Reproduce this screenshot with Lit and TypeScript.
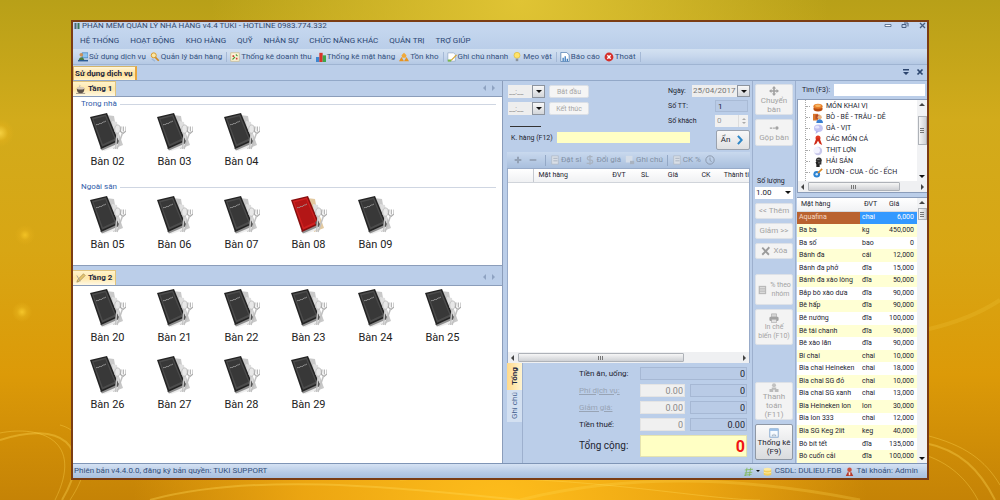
import { LitElement, html, svg, css } from "lit";
import { customElement } from "lit/decorators.js";
import { classMap } from "lit/directives/class-map.js";

type Row = [string, string, string];

const MENU = ["HỆ THỐNG", "HOẠT ĐỘNG", "KHO HÀNG", "QUỸ", "NHÂN SỰ", "CHỨC NĂNG KHÁC", "QUẢN TRỊ", "TRỢ GIÚP"];

const TOOLS: [string, string][][] = [
  [["desk", "Sử dụng dịch vụ"], ["search", "Quản lý bán hàng"]],
  [["calendar", "Thống kê doanh thu"], ["chart", "Thống kê mặt hàng"], ["boxes", "Tồn kho"]],
  [["note", "Ghi chú nhanh"], ["bulb", "Mẹo vặt"]],
  [["report", "Báo cáo"], ["exit", "Thoát"]],
];

const TREE: [string, string][] = [
  ["cake", "MÓN KHAI VỊ"],
  ["people", "BÒ - BÊ - TRÂU - DÊ"],
  ["bubble", "GÀ - VỊT"],
  ["ribbon", "CÁC MÓN CÁ"],
  ["moon", "THỊT LỢN"],
  ["dark", "HẢI SẢN"],
  ["guitar", "LƯƠN - CUA - ỐC - ẾCH"],
];

const ITEMS: Row[] = [
  ["Aquafina", "chai", "6,000"],
  ["Ba ba", "kg", "450,000"],
  ["Ba số", "bao", "0"],
  ["Bánh đa", "cái", "12,000"],
  ["Bánh đa phở", "đĩa", "15,000"],
  ["Bánh đa xào lòng", "đĩa", "50,000"],
  ["Bắp bò xào dưa", "đĩa", "90,000"],
  ["Bê hấp", "đĩa", "90,000"],
  ["Bê nướng", "đĩa", "100,000"],
  ["Bê tái chanh", "đĩa", "90,000"],
  ["Bê xào lăn", "đĩa", "90,000"],
  ["Bí chai", "chai", "10,000"],
  ["Bia chai Heineken", "chai", "18,000"],
  ["Bia chai SG đỏ", "chai", "10,000"],
  ["Bia chai SG xanh", "chai", "13,000"],
  ["Bia Heineken lon", "lon", "30,000"],
  ["Bia lon 333", "chai", "12,000"],
  ["Bia SG Keg 2lít", "keg", "40,000"],
  ["Bò bít tết", "đĩa", "135,000"],
  ["Bò cuốn cải", "đĩa", "100,000"],
];

/* All glyphs share a 12 x 12 grid. */
const GLYPHS: Record<string, unknown> = {
  desk: svg`<rect x="5" y="1" width="7" height="6" fill="#8fc4ee" stroke="#3b7ec0" stroke-width=".8"/><circle cx="4" cy="3.4" r="2.2" fill="#c9925a"/><path d="M1 10c0-5 6-5 6.500 0z" fill="#4b7d3c"/><path d="M0 9.500h12v1.800H0z" fill="#2c5d96"/>`,
  search: svg`<circle cx="4.500" cy="4" r="3" fill="#fbe7a5" stroke="#d99a2b" stroke-width="1.200"/><path d="M6.500 6.500l4 4" stroke="#d08a20" stroke-width="2"/><path d="M2 8l4 3" stroke="#9ab6d8" stroke-width="1.500"/>`,
  calendar: svg`<rect x="1" y="1" width="10" height="10" fill="#fdf6dc" stroke="#cdb77a" stroke-width=".8"/><path d="M3 4h2v2H3zM7 7h2v2H7z" fill="#d23c2e"/><path d="M7 3l2 2M3 9l3-3" stroke="#4b9a3a" stroke-width="1.300"/>`,
  chart: svg`<path d="M0 6h4v6H0z" fill="#3f87cf"/><path d="M4 1h4v11H4z" fill="#d8342a"/><path d="M8 4h4v8H8z" fill="#3da64a"/>`,
  boxes: svg`<path d="M6 1l3 3-1 3H4L3 4z" fill="#f0a93a"/><path d="M3 6l3 5H0zM9 6l3 5H6z" fill="#e8941f"/>`,
  note: svg`<path d="M1 1h7l2 2v8H1z" fill="#fff" stroke="#8aa2bf" stroke-width=".8"/><path d="M12 4L6 10l-2 1 1-2 6-6z" fill="#d9a62e"/><path d="M1 9h4v2.500H1z" fill="#7cb84a"/>`,
  bulb: svg`<circle cx="6" cy="4" r="3.600" fill="#ffe36b" stroke="#d8b12a" stroke-width=".7"/><path d="M4.500 8h3v3h-3z" fill="#8b939c"/>`,
  report: svg`<path d="M1 .5h7l3 3v8H1z" fill="#fff" stroke="#4a79ad" stroke-width=".9"/><path d="M3 7h1.500v4H3zM5.500 5H7v6H5.500zM8 8h1.500v3H8z" fill="#2f72b8"/>`,
  exit: svg`<circle cx="6" cy="6" r="5.300" fill="#d5302b"/><path d="M4 4l4 4M8 4l-4 4" stroke="#fff" stroke-width="1.700"/>`,
  cup: svg`<path d="M1 5h9c0 5-2 6-4.500 6S1 10 1 5z" fill="#5d5147"/><ellipse cx="5.500" cy="5" rx="4.500" ry="1.600" fill="#d9cbb8"/><path d="M0 11.300h11" stroke="#8e8376"/><path d="M4 1c2 1-1 2 1 3" stroke="#999" fill="none" stroke-width=".7"/>`,
  pencil: svg`<path d="M1 11l1-3 7-7 2 2-7 7z" fill="#e7c56d" stroke="#8b7a4d" stroke-width=".7"/><path d="M1 3l4 7" stroke="#9b9b9b"/>`,
  cake: svg`<ellipse cx="6" cy="8" rx="5.500" ry="3.300" fill="#b94d12"/><ellipse cx="6" cy="5" rx="5.500" ry="3" fill="#e8802a"/><ellipse cx="6" cy="4.500" rx="3.500" ry="1.500" fill="#f7b565"/>`,
  people: svg`<path d="M0 1h6v8H0z" fill="#d9772c"/><path d="M3 2h5v5H3z" fill="#b54a26"/><circle cx="8" cy="5" r="2.500" fill="#e9b27c"/><path d="M4 12c0-6 8-6 8 0z" fill="#3a7fd0"/>`,
  bubble: svg`<ellipse cx="6.500" cy="5" rx="5.300" ry="4.500" fill="#c3c3f2"/><ellipse cx="5" cy="3.800" rx="2.500" ry="1.600" fill="#e6e6fd"/><path d="M4 8l-1 4 4-3z" fill="#b0b0e8"/>`,
  ribbon: svg`<circle cx="6" cy="3.500" r="3" fill="#e03a22"/><path d="M4 4l-3 8 3-1.500L6 7l2 3.500 3 1.500-3-8z" fill="#cf2b18"/>`,
  moon: svg`<circle cx="6" cy="6" r="5" fill="#c9c9ea"/><circle cx="4.500" cy="5" r="3.800" fill="#f3f3ff"/>`,
  dark: svg`<circle cx="7" cy="4" r="3.500" fill="#333"/><path d="M3 6h7v3H8v3H4V9z" fill="#222"/><path d="M5 3h3M6 7h3" stroke="#8a8a8a"/>`,
  guitar: svg`<circle cx="4.500" cy="7.500" r="4" fill="#2c83d2"/><circle cx="4.500" cy="7.500" r="1.500" fill="#d6ecff"/><path d="M6 6l5-5" stroke="#d8892a" stroke-width="2"/>`,
  move: svg`<path d="M6 0l2.500 3H7v2h2V3.500L12 6 9 8.500V7H7v2h1.500L6 12 3.500 9H5V7H3v1.500L0 6l3-2.500V5h2V3H3.500z" fill="#a2a2a2"/>`,
  join: svg`<path d="M1 6h3M5 6h2" stroke="#a2a2a2" stroke-width="1.500"/><circle cx="9.500" cy="6" r="2" fill="#a2a2a2"/>`,
  cross: svg`<path d="M1.500 2l8 8.500M10 1.500l-8.500 9" stroke="#9b9b9b" stroke-width="2.200"/>`,
  list: svg`<path d="M2 1h9v10H2z" fill="#b9b9b9"/><path d="M3.500 3h6M3.500 5h6M3.500 7h6M3.500 9h6" stroke="#ececec" stroke-width=".8"/>`,
  print: svg`<path d="M3 1h6v4H3z" fill="#d5d5d5" stroke="#a2a2a2" stroke-width=".7"/><rect x=".5" y="4.500" width="11" height="5" rx="1.500" fill="#a2a2a2"/><path d="M3 7.500h6v4H3z" fill="#e2e2e2" stroke="#a2a2a2" stroke-width=".7"/>`,
  pay: svg`<circle cx="6" cy="3" r="2.700" fill="#c2c2c2"/><path d="M3 6h6v3H3zM0 8h5v4H0zM7 8h5v4H7z" fill="#bbb"/>`,
  stat: svg`<rect x="1" y="1" width="10" height="10" fill="#f7fbff" stroke="#6a95c6" stroke-width=".9"/><path d="M1 1h10v2.500H1z" fill="#9dc1e8"/><path d="M4 8v2M6 7v3M8 8v2" stroke="#7a8fa8" stroke-width=".9"/>`,
  arrow: svg`<path d="M3.500 1L8 6l-4.500 5" fill="none" stroke="#2e87c8" stroke-width="2.400"/>`,
  plus: svg`<path d="M6 1v10M1 6h10" stroke="#93a1b5" stroke-width="3"/>`,
  minus: svg`<path d="M1 6h10" stroke="#93a1b5" stroke-width="2.600"/>`,
  sheet: svg`<path d="M2 1h8v10H2z" fill="#d9dfe7" stroke="#acb6c4" stroke-width=".8"/><path d="M4 4h5M4 7h5" stroke="#a4adba"/>`,
  coin: svg`<path d="M9 2H5C2 2 2 6 5 6h2c3 0 3 4 0 4H2M6 0v12" fill="none" stroke="#a9b3c1" stroke-width="1.500"/>`,
  memo: svg`<path d="M1 1h8v8H1z" fill="#d5dde8"/><path d="M6 7h5v4H6z" fill="#a9b3c1"/>`,
  clock: svg`<circle cx="6" cy="6" r="5" fill="none" stroke="#8d9aae" stroke-width="1.200"/><path d="M6 3v3.500l2 1.500" fill="none" stroke="#8d9aae" stroke-width="1.100"/>`,
  grid: svg`<path d="M1 4l11-1M1 8l10-1M0 11l10-1M4 1L2 12M9 1L7 12" stroke="#7fb95a" stroke-width="1.100"/>`,
  db: svg`<path d="M1 3v7c0 2 10 2 10 0V3z" fill="#f2cf5b"/><ellipse cx="6" cy="3" rx="5" ry="2" fill="#fdeaa3"/><path d="M1 6.500c0 2 10 2 10 0" fill="none" stroke="#fff3c4"/>`,
  user: svg`<circle cx="6" cy="3.500" r="3" fill="#c9503c"/><path d="M1 12l2.500-5h5L11 12z" fill="#b73a2c"/><path d="M5 7h2v4H5z" fill="#f3e1d8"/>`,
  app: svg`<path d="M1 0h4v12H1z" fill="#4d6a7c"/><path d="M7 0h4v12H7z" fill="#39775a"/>`,
};

const icon = (name: string) =>
  html`<svg class="icon ${name}" viewBox="0 0 12 12" aria-hidden="true">${GLYPHS[name]}</svg>`;

const menuBook = (busy: boolean) => {
  const [cover, edge, inner, napkin] = busy
    ? ["#b31616", "#860e0e", "#cf2020", "#e2c9a0"]
    : ["#383838", "#232323", "#4c4c4c", "#c9c9c9"];
  return html`<svg class="book" viewBox="0 0 36 38" aria-hidden="true">
    <path d="M16 2l8 1 1 6 8 23-10 4z" fill="${napkin}" />
    <path d="M22 8l5 1 2 16-4 8z" fill="#dedede" />
    <path d="M11 36l17-6 1 3-15 5z" fill="#ececec" />
    <path d="M10 35l18-7 .8 2.200L12 37.500z" fill="#8f8f8f" />
    <path d="M0 4L17 0l11.500 28L11 36z" fill="${edge}" />
    <path d="M1.800 5L16 1.600l10.500 25.600L12 33.800z" fill="${inner}" />
    <path d="M3.500 6.200L15.300 3.300l9.200 22.500-11.700 5.400z" fill="${cover}" />
    <path d="M6 12c2-2 1 1 3-1s1 1 3-1 1 0 4-2" fill="none" stroke="#a5a5a5" stroke-width=".8" />
    <path d="M24 27l2.500-3.500L29 29l-2 2z" fill="#555" />
    <ellipse cx="27.500" cy="16" rx="2.800" ry="4.200" fill="#e8e8e8" stroke="#b5b5b5" stroke-width=".7" transform="rotate(8 27 16)" />
    <path d="M27 20l-1.500 16" stroke="#c4c4c4" stroke-width="1.400" />
    <path d="M31 13.500l-.5 5 2.500 2 3-2.500v-4.500M33.300 13.500v5" fill="none" stroke="#ababab" stroke-width="1.100" />
    <path d="M32.500 20l-5.500 16" stroke="#c0c0c0" stroke-width="1.500" />
  </svg>`;
};

const table = (n: string) => html`<button class="seat">${menuBook(n === "08")}<span>Bàn ${n}</span></button>`;

const floorHead = (glyph: string, name: string) => html`<header class="floor-head">
  <button class="floor-tab">${icon(glyph)}${name}</button>
  <span class="pager"><i class="tri left"></i><i class="tri right"></i></span>
</header>`;

@customElement("app-root")
export class AppRoot extends LitElement {
  static styles = css`
    :host {
      display: flex;
      position: relative;
      box-sizing: border-box;
      height: 100vh;
      padding: 20px 71px;
      overflow: hidden;
      font: 8px/10px Roboto, "Liberation Sans", sans-serif;
      color: #1d2430;
      background:
        radial-gradient(circle at 22px 312px, #f5c62a 0, #e7b31c88 5px, #0000 10px),
        radial-gradient(circle at 25px 235px, #f2c224 0, #e7b31c66 5px, #0000 10px),
        radial-gradient(circle at 0 133px, #f5d040 0, #e7b31c66 8px, #0000 14px),
        radial-gradient(ellipse at 50% 104%, #ffbe1c 0, #ffb617aa 28%, #0000 52%),
        radial-gradient(ellipse at 52% 0, #e0c434 0, #0000 42%),
        linear-gradient(#b8a018, #d2ab1b 24%, #d8a614 50%, #dc9a08 75%, #c58306);
    }
    * { box-sizing: border-box; }
    button, input, select { font: inherit; color: inherit; margin: 0; padding: 0; border: 0; border-radius: 0; background: none; min-width: 0; }
    .backdrop { position: absolute; inset: 0; width: 100%; height: 100%; }
    .window { position: relative; flex: 1; display: flex; flex-direction: column; min-width: 0; border: 2px solid #7b3d14; background: #bbcee9; overflow: hidden; }
    .icon { flex: none; width: 10px; height: 10px; }
    .tri { width: 0; height: 0; border: 3px solid #0000; }
    .tri.left { border-left: 0; border-right-color: #8fa3c2; }
    .tri.right { border-right: 0; border-left-color: #8fa3c2; }
    .tri.down { border-bottom: 0; border-top-color: #111; }
    .tri.up { border-top: 0; border-bottom-color: #444; }

    .title { display: flex; align-items: center; height: 8px; padding: 0 1px; gap: 2px; overflow: hidden; color: #33486b; background: #c4d6ee; }
    .title .icon { width: 6px; height: 8px; }
    .title h1 { margin: 0; font: inherit; line-height: 8px; flex: 1; }
    .caption { display: flex; gap: 9px; }
    .caption button { width: 8px; height: 8px; color: #4a5f80; display: flex; }
    .caption svg { width: 8px; height: 8px; }
    .menu { display: flex; gap: 11px; height: 19px; padding: 2px 7px 0; background: linear-gradient(#c4d6ee, #bacee9); color: #2b4672; }
    .tools { display: flex; align-items: center; height: 16px; padding-left: 5px; background: linear-gradient(#d3e1f1, #c8d8ed 45%, #b4c8e4); border-bottom: 1px solid #9fb4d2; color: #34527f; }
    .tool-group { display: flex; gap: 4px; padding-right: 4px; margin-right: 3px; border-right: 1px solid #a5b9d6; }
    .tools button { display: flex; align-items: center; gap: 1px; white-space: nowrap; }
    .pages { display: flex; align-items: flex-end; justify-content: space-between; height: 16px; border-bottom: 1px solid #92a8c8; }
    .page-tab { height: 14px; padding: 0 2px 0 1px; font-weight: 700; color: #1b2742; background: linear-gradient(#fff6da, #ffdf94 60%, #fff2cb); border: 1px solid #d5b56a; border-bottom: 0; border-right: 2px solid #e7a63d; }
    .page-ctl { display: flex; gap: 6px; padding: 0 3px 4px; }
    .page-ctl svg { width: 8px; height: 8px; display: block; }

    .body { flex: 1; display: flex; min-height: 0; }
    .floors { flex: 1; min-width: 0; display: flex; flex-direction: column; border-right: 1px solid #8b9dba; }
    .floor-head { flex: none; display: flex; align-items: flex-end; justify-content: space-between; height: 16px; border-bottom: 1px solid #8b9dba; }
    .floor-tab { display: flex; align-items: center; gap: 2px; height: 15px; padding: 0 3px; font-weight: 700; color: #1b2742; background: linear-gradient(#fff3cc, #ffe7a8 50%, #fff9e6); border: 1px solid #e0c37e; border-width: 1px 1px 0 0; }
    .pager { display: flex; gap: 6px; padding: 0 7px 5px; }
    .floor { background: #fff; padding-top: 2px; }
    .floor.first { margin-bottom: 4px; border-bottom: 1px solid #8b9dba; }
    .floor.rest { flex: 1; padding-top: 3px; }
    .zone { height: 83px; }
    .zone h2 { display: flex; align-items: center; gap: 3px; margin: 0 6px 4px 8px; font: inherit; color: #2f5ba8; }
    .zone h2::after { content: ""; flex: 1; height: 1px; background: #cfd6e2; }
    .seats { display: grid; grid-template-columns: repeat(auto-fill, 67px); row-gap: 11px; padding-left: 1px; }
    .seat { display: flex; flex-direction: column; align-items: center; gap: 4px; height: 56px; font-size: 11px; line-height: 14px; color: #222; }
    .book { width: 36px; height: 38px; flex: none; }

    .order { flex: none; width: 245px; margin-left: 4px; display: flex; flex-direction: column; }
    .form { display: flex; justify-content: space-between; height: 70px; padding: 4px 2px 0 1px; font-size: 7px; }
    .col { display: flex; flex-direction: column; gap: 3px; }
    .line { display: flex; align-items: center; gap: 4px; }
    .combo { display: flex; height: 13px; width: 37px; background: #eee; }
    .combo input { flex: 1; width: 20px; padding-left: 1px; color: #888; }
    .drop { flex: none; width: 13px; border: 1px solid #8d949e; background: linear-gradient(#f8f8f8, #d3d6da); display: grid; place-items: center; }
    .soft { height: 13px; width: 40px; color: #a5a5a5; background: #f5f5f5; border: 1px solid #dadfe6; border-radius: 2px; }
    .left-col { width: 150px; }
    .left-col > .line:first-child { margin-bottom: 1px; }
    .rule { width: 31px; height: 1px; margin: 8px 2px 2px; background: #333; }
    .customer { flex: none; height: 11px; width: 133px; background: #ffffc4; }
    .left-col label { flex: none; padding-left: 3px; width: 45px; white-space: nowrap; }
    .right-col { flex: none; width: 82px; font-size: 8px; }
    .right-col .line { justify-content: space-between; gap: 0; height: 12px; }
    .right-col label { font-size: 7px; white-space: nowrap; }
    .right-col .combo { width: 58px; height: 12px; }
    .right-col .combo input { color: #777; }
    .ro { width: 33px; height: 12px; padding: 0 2px; border: 1px solid #a9bbd6; background: #b9cbe6; margin-right: 2px; }
    .spin { display: flex; width: 33px; height: 12px; margin-right: 2px; background: #f1f1f1; }
    .spin input { width: 23px; padding-left: 2px; color: #999; }
    .spin span { width: 10px; display: grid; place-items: center; align-content: space-evenly; border-left: 1px solid #ddd; }
    .spin .tri { border-width: 2px; }
    .spin .up { border-top: 0; border-bottom-color: #aaa; }
    .spin .down { border-bottom: 0; border-top-color: #aaa; }
    .hide { display: flex; align-items: center; justify-content: center; gap: 5px; align-self: flex-end; width: 34px; height: 20px; background: linear-gradient(#f8f8f8, #dfe0e2); border: 1px solid #9aa2ae; border-radius: 2px; }
    .order-tools { display: flex; align-items: center; gap: 4px; height: 16px; margin: 1px 2px 0 0; padding-left: 7px; color: #8290a5; background: linear-gradient(#c9d9ee, #a9bfdd); }
    .order-tools button { display: flex; align-items: center; gap: 1px; white-space: nowrap; }
    .order-tools .bar { width: 1px; height: 11px; background: #93a8c6; }
    .order-tools .plus, .order-tools .minus { width: 8px; height: 8px; }
    .order-tools .minus { margin: 0 4px 0 3px; }
    .lines { flex: 1; min-height: 0; margin-right: 2px; background: #fff; border: 1px solid #98abc9; border-width: 1px 1px 0 1px; overflow: hidden; display: flex; flex-direction: column; }
    .lines > div:first-child { flex: 1; }
    .lines table { table-layout: fixed; width: 100%; border-collapse: collapse; font-size: 7px; }
    .lines th { height: 13px; padding: 0; font-weight: 400; white-space: nowrap; background: linear-gradient(#fff, #f0f1f3); border-bottom: 1px solid #d0d4da; }
    .lines th:first-child { border-right: 1px solid #c5c9d0; }
    .lines th.name { text-align: left; padding-left: 5px; }
    .lines th.last { text-align: right; }
    .hbar { flex: none; display: flex; align-items: center; gap: 4px; height: 11px; padding: 0 3px; background: #eff0f2; }
    .hbar .tri.left { border-right-color: #444; }
    .hbar .tri.right { border-left-color: #444; }
    .hbar .track { flex: 1; height: 9px; }
    .thumb { height: 9px; display: grid; place-items: center; border: 1px solid #aeb2b8; border-radius: 1px; background: linear-gradient(#f6f6f6, #cfd1d5); }
    .thumb::after { content: ""; width: 5px; height: 4px; background: repeating-linear-gradient(90deg, #777 0 1px, #0000 1px 2px); }
    .sum { flex: none; display: flex; height: 100px; margin-right: 2px; }
    .side-tabs { display: flex; flex-direction: column; width: 15px; }
    .side-tabs button { writing-mode: vertical-rl; transform: rotate(180deg); width: 15px; height: 32px; color: #45618f; background: #d3e0f1; }
    .side-tabs .on { height: 27px; font-weight: 700; color: #1b2742; background: linear-gradient(90deg, #fff4d0, #ffd98a); }
    .totals { flex: 1; display: grid; grid-template-columns: 1fr 45px 57px; column-gap: 5px; row-gap: 4px; align-content: start; padding: 4px 3px 0 56px; border-left: 1px solid #9db0ce; }
    .totals label, .totals a { align-self: center; white-space: nowrap; }
    .totals a { color: #98a4b5; text-decoration: underline; }
    .totals input { width: 100%; height: 13px; padding: 0 1px; text-align: right; font-size: 9px; border: 1px solid #a6b8d4; background: #b9cbe6; }
    .totals .edit { background: #f0f0f0; border-color: #e4e4e4; color: #8a8a8a; }
    .totals .wide { grid-column: 2 / 4; }
    .totals .grand { height: 22px; background: #ffffc4; border-color: #e5e3b0; color: #f01414; font-size: 16px; font-weight: 700; }
    .totals .big { font-size: 10px; }

    .actions { flex: none; width: 44px; display: flex; flex-direction: column; gap: 4px; padding: 3px 2px; border: 1px solid #9db0ce; border-width: 0 1px; }
    .actions button { display: flex; flex-direction: column; align-items: center; justify-content: center; height: 16px; flex: none; line-height: 9px; white-space: nowrap; color: #a3a3a3; background: #f3f3f3; border: 1px solid #dde1e7; border-radius: 2px; }
    .actions .row { flex-direction: row; gap: 3px; }
    .actions .small { font-size: 7px; }
    .actions .t27 { height: 27px; }
    .actions .t31 { height: 31px; }
    .actions .t36 { height: 36px; }
    .actions .t38 { height: 38px; }
    .actions .t38 .icon { height: 9px; }
    .actions .ready { color: #1d2430; background: linear-gradient(#fafafa, #d9dbde); border-color: #8f98a5; }
    .qty { display: flex; flex-direction: column; gap: 1px; font-size: 7px; }
    .qty label { padding-left: 2px; }
    .pick { display: flex; align-items: center; height: 12px; padding-right: 2px; background: #fff; }
    .pick select { flex: 1; appearance: none; padding-left: 1px; font-size: 8px; line-height: 12px; }
    .gap { flex: 6 1 0; }
    .gap.small { flex-grow: 2; }
    .gap.large { flex-grow: 8; }

    .catalog { flex: none; width: 131px; display: flex; flex-direction: column; padding-left: 1px; }
    .find { display: flex; align-items: center; gap: 4px; height: 18px; padding: 0 2px 1px 5px; font-size: 7px; }
    .find label { width: 28px; white-space: nowrap; }
    .find input { flex: 1; height: 12px; background: #fff; }
    .tree { flex: none; height: 94px; margin-bottom: 4px; border: 1px solid #8b9dba; border-right: 0; background: #fff; display: flex; flex-direction: column; }
    .tree-main { flex: 1; min-height: 0; display: flex; overflow: hidden; }
    .tree ul { flex: 1; list-style: none; margin: 0 0 0 7px; padding: 1px 0 0; border-left: 1px dotted #aaa; font-size: 7px; line-height: 11px; }
    .tree li { display: flex; align-items: center; gap: 3px; height: 11px; white-space: nowrap; }
    .tree li::before { content: ""; width: 4px; border-top: 1px dotted #aaa; }
    .vbar { flex: none; width: 10px; display: flex; flex-direction: column; align-items: center; gap: 4px; padding: 3px 0; background: #f1f2f4; }
    .vbar .grow { flex: 1; }
    .grip { width: 9px; height: 29px; display: grid; place-items: center; border: 1px solid #aeb2b8; background: linear-gradient(90deg, #f6f6f6, #cfd1d5); }
    .tree .grip { margin-top: 6px; }
    .grip::after { content: ""; width: 4px; height: 5px; background: repeating-linear-gradient(#777 0 1px, #0000 1px 2px); }
    .grip.short { height: 12px; }
    .goods { flex: 1; min-height: 0; display: flex; background: #fff; border-top: 1px solid #8b9dba; }
    .goods table { flex: 1; table-layout: fixed; width: 100%; height: 100%; border-collapse: collapse; font-size: 7px; line-height: 9px; }
    .goods th { height: 13px; text-align: left; font-weight: 400; padding: 0 4px; background: linear-gradient(#fff, #f1f2f4); border-bottom: 1px solid #d5d9df; }
    .goods td { padding: 0 2px; white-space: nowrap; }
    .goods td:last-child { text-align: right; padding-right: 3px; }
    .goods tbody tr:nth-child(even) { background: #ffffd4; }
    .goods .sel td { color: #fff; background: #3399ff; }
    .goods .sel td:first-child { background: #b9622f; color: #f5d9c8; }

    .status { flex: none; display: flex; align-items: center; gap: 3px; height: 15px; padding: 0 9px 0 1px; color: #34507c; border-top: 1px solid #7f95b6; background: linear-gradient(#d5e2f3, #b7cbe6 60%, #a9c0de); }
    .status span:first-child { flex: 1; }
    .status .tri { border-width: 2px 2px 0; }
    .status .icon { width: 9px; height: 9px; }
  `;

  render() {
    return html`
      <svg class="backdrop" viewBox="0 0 1000 500" preserveAspectRatio="none" fill="none" aria-hidden="true">
        <g stroke="#ffdb55" stroke-opacity=".35">
          <path d="M55 500C85 440 40 425 0 433" />
          <path d="M62 500C95 445 60 420 0 440" stroke-width="2" />
          <path d="M70 500C100 455 80 430 60 425" />
          <path d="M150 500C260 470 420 490 520 500" stroke-width="2" />
          <path d="M400 480C560 470 700 500 760 500" />
          <path d="M520 500C640 470 760 480 860 500" stroke-width="3" stroke-opacity=".25" />
          <path d="M925 435C965 445 985 460 1000 485" />
          <path d="M925 443C960 450 980 470 995 500" stroke-width="2" />
          <path d="M925 455C955 465 970 485 978 500" />
          <path d="M925 330C960 322 985 310 1000 300" stroke-width="4" stroke-opacity=".15" />
        </g>
      </svg>
      <main class="window">
        <header class="title">
          ${icon("app")}
          <h1>PHẦN MỀM QUẢN LÝ NHÀ HÀNG v4.4 TUKI - HOTLINE 0983.774.332</h1>
          <span class="caption">
            <button aria-label="Thu nhỏ"><svg viewBox="0 0 8 8"><path d="M1 2.500h6v2H1z" fill="#fff" stroke="currentColor" stroke-width=".8" /></svg></button>
            <button aria-label="Khôi phục"><svg viewBox="0 0 8 8" fill="none" stroke="currentColor"><path d="M1 2.500h4v3H1zM3 1h4v3.500" /></svg></button>
            <button aria-label="Đóng"><svg viewBox="0 0 8 8" fill="none" stroke="currentColor" stroke-width="1.300"><path d="M2 1l5 5M7 1L2 6" /></svg></button>
          </span>
        </header>
        <nav class="menu">${MENU.map((m) => html`<button>${m}</button>`)}</nav>
        <div class="tools" role="toolbar">
          ${TOOLS.map((g) => html`<div class="tool-group">${g.map(([i, t]) => html`<button>${icon(i)}${t}</button>`)}</div>`)}
        </div>
        <div class="pages">
          <button class="page-tab">Sử dụng dịch vụ</button>
          <span class="page-ctl">
            <button aria-label="Danh sách"><svg viewBox="0 0 8 8"><path d="M1 1h6v1.500H1zM1 4h6L4 7z" fill="#2c456e" /></svg></button>
            <button aria-label="Đóng trang"><svg viewBox="0 0 8 8"><path d="M1.500 1.500l5 5M6.500 1.500l-5 5" stroke="#2c456e" stroke-width="1.700" /></svg></button>
          </span>
        </div>
        <div class="body">
          <section class="floors">
            ${floorHead("cup", "Tầng 1")}
            <div class="floor first">
              <div class="zone"><h2>Trong nhà</h2><div class="seats">${["02", "03", "04"].map(table)}</div></div>
              <div class="zone"><h2>Ngoài sân</h2><div class="seats">${["05", "06", "07", "08", "09"].map(table)}</div></div>
            </div>
            ${floorHead("pencil", "Tầng 2")}
            <div class="floor rest">
              <div class="seats">${["20", "21", "22", "23", "24", "25", "26", "27", "28", "29"].map(table)}</div>
            </div>
          </section>
          ${this.order()} ${this.actions()} ${this.catalog()}
        </div>
        <footer class="status">
          <span>Phiên bản v4.4.0.0, đăng ký bản quyền: TUKI SUPPORT</span>
          ${icon("grid")}<i class="tri down"></i>${icon("db")}<span>CSDL: DULIEU.FDB</span>${icon("user")}<span>Tài khoản: Admin</span>
        </footer>
      </main>
    `;
  }

  private order() {
    const time = (id: string, label: string) => html`<div class="line">
      <span class="combo"><input aria-label=${label} id=${id} value="__:__" /><button class="drop" aria-label="Chọn giờ"><i class="tri down"></i></button></span>
      <button class="soft">${label}</button>
    </div>`;
    return html`<section class="order">
      <div class="form">
        <div class="col left-col">
          ${time("start", "Bắt đầu")} ${time("end", "Kết thúc")}
          <div class="rule"></div>
          <div class="line"><label for="customer">K. hàng (F12)</label><input id="customer" class="customer" /></div>
        </div>
        <div class="col right-col">
          <div class="line"><label for="date">Ngày:</label><span class="combo"><input id="date" value="25/04/2017" /><button class="drop" aria-label="Chọn ngày"><i class="tri down"></i></button></span></div>
          <div class="line"><label for="no">Số TT:</label><input id="no" class="ro" value="1" readonly /></div>
          <div class="line"><label for="guests">Số khách</label><span class="spin"><input id="guests" value="0" /><span><i class="tri up"></i><i class="tri down"></i></span></span></div>
          <button class="hide">Ẩn ${icon("arrow")}</button>
        </div>
      </div>
      <div class="order-tools" role="toolbar">
        <button aria-label="Tăng">${icon("plus")}</button><button aria-label="Giảm">${icon("minus")}</button><i class="bar"></i>
        <button>${icon("sheet")}Đặt sl</button><button>${icon("coin")}Đổi giá</button><button>${icon("memo")}Ghi chú</button><i class="bar"></i>
        <button>${icon("sheet")}CK %</button><button aria-label="Giờ">${icon("clock")}</button>
      </div>
      <div class="lines">
        <div>
          <table>
            <colgroup><col width="25" /><col width="72" /><col width="28" /><col width="24" /><col width="32" /><col width="34" /><col /></colgroup>
            <thead><tr><th></th><th class="name">Mặt hàng</th><th>ĐVT</th><th>SL</th><th>Giá</th><th>CK</th><th class="last">Thành ti</th></tr></thead>
          </table>
        </div>
        <div class="hbar"><i class="tri left"></i><div class="track"><div class="thumb" style="width:75%"></div></div><i class="tri right"></i></div>
      </div>
      <div class="sum">
        <div class="side-tabs"><button class="on">Tổng</button><button>Ghi chú</button></div>
        <div class="totals">
          <label for="food">Tiền ăn, uống:</label><input id="food" class="wide" value="0" readonly />
          <a href="#service">Phí dịch vụ:</a><input class="edit" aria-label="Phí dịch vụ" value="0.00" /><input aria-label="Tiền dịch vụ" value="0" readonly />
          <a href="#discount">Giảm giá:</a><input class="edit" aria-label="Giảm giá" value="0.00" /><input aria-label="Tiền giảm" value="0" readonly />
          <label for="tax">Tiền thuế:</label><input id="tax" class="edit" value="0" /><input aria-label="Tiền thuế" value="0.00" readonly />
          <label class="big" for="grand">Tổng cộng:</label><input id="grand" class="wide grand" value="0" readonly />
        </div>
      </div>
    </section>`;
  }

  private actions() {
    return html`<section class="actions">
      <button class="t31">${icon("move")}<span>Chuyển<br />bàn</span></button>
      <button class="t27">${icon("join")}<span>Gộp bàn</span></button>
      <div class="gap"></div>
      <div class="qty">
        <label for="qty">Số lượng</label>
        <span class="pick"><select id="qty"><option>1.00</option></select><i class="tri down"></i></span>
      </div>
      <button>&lt;&lt; Thêm</button>
      <button>Giảm &gt;&gt;</button>
      <button class="row">${icon("cross")}Xóa</button>
      <div class="gap small"></div>
      <button class="row small t31">${icon("list")}<span>% theo<br />nhóm</span></button>
      <button class="small t36">${icon("print")}<span>In chế<br />biến (F10)</span></button>
      <div class="gap large"></div>
      <button class="t38">${icon("pay")}<span>Thanh<br />toán<br />(F11)</span></button>
      <button class="t36 ready">${icon("stat")}<span>Thống kê<br />(F9)</span></button>
    </section>`;
  }

  private catalog() {
    return html`<section class="catalog">
      <div class="find"><label for="find">Tìm (F3):</label><input id="find" type="text" /></div>
      <div class="tree">
        <div class="tree-main">
          <ul>${TREE.map(([i, t]) => html`<li>${icon(i)}${t}</li>`)}</ul>
          <div class="vbar"><i class="tri up"></i><div class="grip"></div><div class="grow"></div><i class="tri down"></i></div>
        </div>
        <div class="hbar"><i class="tri left"></i><div class="track"><div class="thumb" style="width:84%"></div></div><i class="tri right"></i></div>
      </div>
      <div class="goods">
        <table>
          <colgroup><col width="63" /><col width="25" /><col /></colgroup>
          <thead><tr><th>Mặt hàng</th><th>ĐVT</th><th>Giá</th></tr></thead>
          <tbody>
            ${ITEMS.map((r, i) => html`<tr class=${classMap({ sel: i === 0 })}>${r.map((c) => html`<td>${c}</td>`)}</tr>`)}
          </tbody>
        </table>
        <div class="vbar"><i class="tri up"></i><div class="grip short"></div><div class="grow"></div><i class="tri down"></i></div>
      </div>
    </section>`;
  }
}
